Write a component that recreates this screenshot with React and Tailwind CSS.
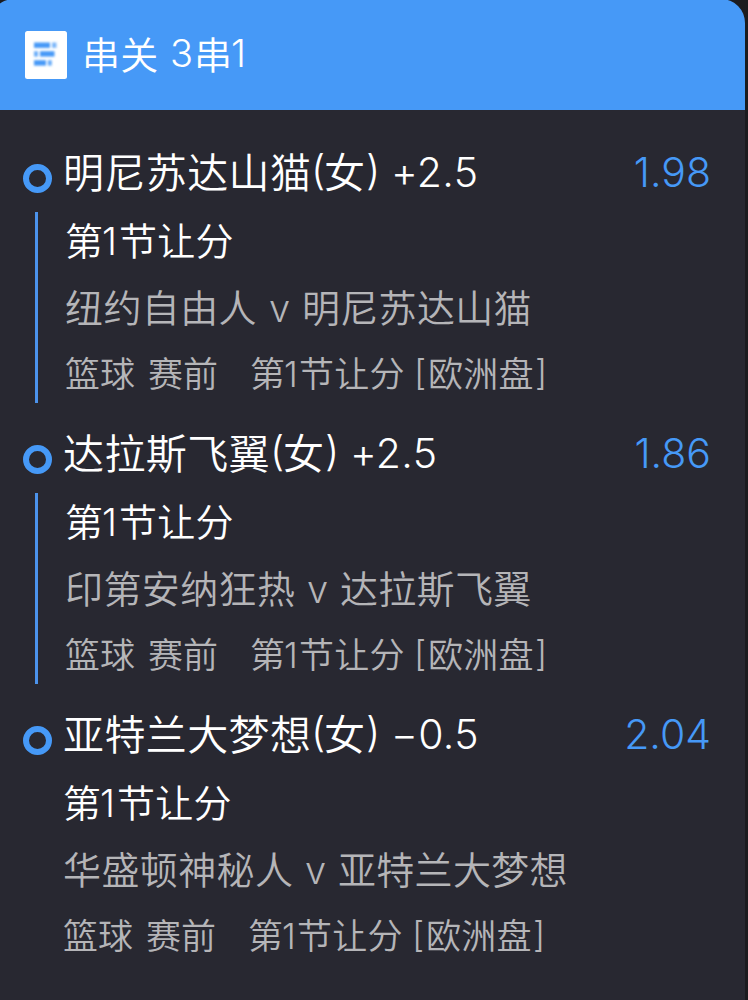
const legs = [
  {
    team: '明尼苏达山猫',
    teamWidth: 'w-[248px]',
    line: '+2.5',
    odds: '1.98',
    home: '纽约自由人',
    homeWidth: 'w-[204px]',
    away: '明尼苏达山猫',
    indent: 'pl-[2px]',
  },
  {
    team: '达拉斯飞翼',
    teamWidth: 'w-[207px]',
    line: '+2.5',
    odds: '1.86',
    home: '印第安纳狂热',
    homeWidth: 'w-[242px]',
    away: '达拉斯飞翼',
    indent: 'pl-[2px]',
  },
  {
    team: '亚特兰大梦想',
    teamWidth: 'w-[248px]',
    line: '−0.5',
    odds: '2.04',
    home: '华盛顿神秘人',
    homeWidth: 'w-[242px]',
    away: '亚特兰大梦想',
    indent: 'pl-0',
    last: true,
  },
];

const CJK_FACE = "font-['Noto_Sans_CJK_SC',sans-serif] font-[350]";
const CJK = `${CJK_FACE} -mt-[5px]`;

function SlipIcon() {
  return (
    <svg className="h-12 w-[42px] shrink-0" viewBox="0 0 42 48" fill="none">
      <defs>
        <filter id="soft" x="-20%" y="-20%" width="140%" height="140%">
          <feGaussianBlur stdDeviation="1" />
        </filter>
      </defs>
      <rect width="42" height="48" rx="2.5" fill="#fff" />
      <g fill="#4699f7" filter="url(#soft)">
        <rect x="9" y="11.5" width="16" height="5.4" />
        <rect x="27" y="11.5" width="4.5" height="5.4" opacity=".7" />
        <rect x="9" y="20.2" width="4" height="5.4" opacity=".8" />
        <rect x="15" y="20.2" width="14.5" height="5.4" />
        <rect x="9" y="29.2" width="12" height="5.4" />
        <rect x="22.8" y="29.2" width="4" height="5.4" opacity=".8" />
      </g>
    </svg>
  );
}

function Leg({ leg }) {
  return (
    <section className="flex h-[281px] pl-[22px] pr-[34px]">
      <div className="flex w-[41px] shrink-0 flex-col">
        <div className="ml-[0.5px] mt-[25.5px] size-[29px] rounded-full border-[6px] border-[#4699f7]" />
        {!leg.last && <div className="ml-[12.5px] mt-[19px] h-[191px] w-[3px] bg-[#4c93ec]" />}
      </div>
      <div className="flex min-w-0 grow flex-col whitespace-pre">
        <div className="flex h-[69px] items-center text-[41px] leading-[69px] text-white">
          <span className={`${CJK} ${leg.teamWidth} shrink-0 tracking-[0.4px]`}>{leg.team}</span>
          <span className="w-[13px] shrink-0 -mt-1">(</span>
          <span className={`${CJK} w-[42px] shrink-0`}>女</span>
          <span className="w-[25px] shrink-0 -mt-1">)</span>
          <span className="-mt-px tracking-[0.4px]">{leg.line}</span>
          <span className="-mt-px ml-auto text-[#4699f7]">{leg.odds}</span>
        </div>
        <div className={`${leg.indent} flex h-[68px] items-center text-[38px] leading-[68px] text-white`}>
          <span className={`${CJK} w-[37px] shrink-0`}>第</span>
          <span className="-mt-px w-[17px] shrink-0">1</span>
          <span className={`${CJK} tracking-[0.3px]`}>节让分</span>
        </div>
        <div className={`${leg.indent} flex h-[66px] items-center text-[38px] leading-[66px] text-[#b5b5b8]`}>
          <span className={`${CJK} ${leg.homeWidth} shrink-0 tracking-[0.4px]`}>{leg.home}</span>
          <span className="w-[33px] shrink-0">v</span>
          <span className={`${CJK} tracking-[0.3px]`}>{leg.away}</span>
        </div>
        <div className={`${leg.indent} flex h-[66px] items-center text-[35px] leading-[66px] text-[#b5b5b8]`}>
          <span className={`${CJK} w-[83px] shrink-0 tracking-[0.1px]`}>篮球</span>
          <span className={`${CJK} w-[102px] shrink-0 tracking-[0.1px]`}>赛前</span>
          <span className={`${CJK} w-[34px] shrink-0`}>第</span>
          <span className="-mt-px w-[15px] shrink-0">1</span>
          <span className={`${CJK} w-[115px] shrink-0 tracking-[0.2px]`}>节让分</span>
          <span className="-mt-[4px] w-[14px] shrink-0">[</span>
          <span className={`${CJK} w-[107px] shrink-0 tracking-[0.3px]`}>欧洲盘</span>
          <span className="-mt-[4px]">]</span>
        </div>
      </div>
    </section>
  );
}

export default function App() {
  return (
    <div className="flex h-[1000px] w-[748px] overflow-hidden bg-[#1b1b1f] pr-[3px] font-['Inter','Noto_Sans_CJK_SC',sans-serif] font-[350]">
      <div className="-ml-[10px] -mt-px h-[1001px] grow overflow-hidden rounded-t-[24px] bg-[#282831]">
        <header className="flex h-[111px] items-center bg-[#4699f7] pl-[35px] text-[38px] text-white">
          <SlipIcon />
          <div className="-mt-[5px] ml-[15px] flex items-center whitespace-pre">
            <span className={`${CJK_FACE} w-[88px] shrink-0 tracking-[0.2px]`}>串关</span>
            <span className="mt-[2px] w-[24px] shrink-0">3</span>
            <span className={`${CJK_FACE} w-[37px] shrink-0`}>串</span>
            <span className="mt-[2px]">1</span>
          </div>
        </header>
        <main className="pl-[10px] pt-[28px]">
          {legs.map((leg) => (
            <Leg key={leg.odds} leg={leg} />
          ))}
        </main>
      </div>
    </div>
  );
}
